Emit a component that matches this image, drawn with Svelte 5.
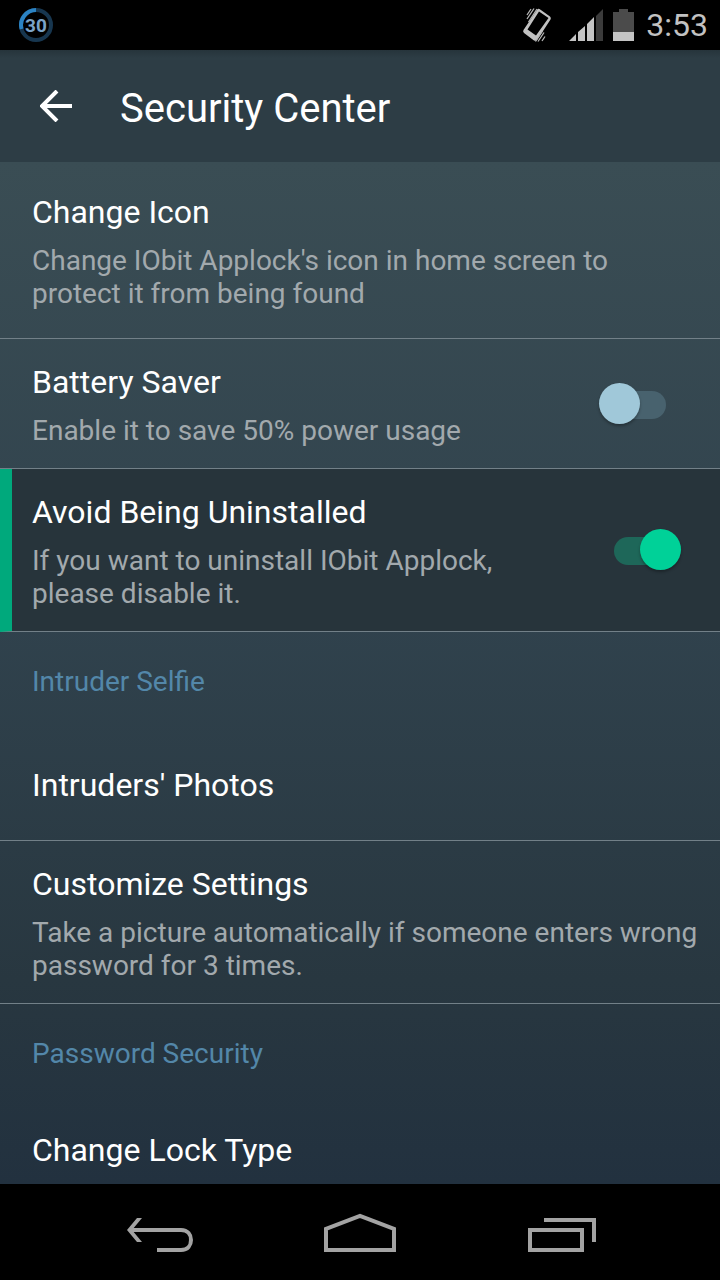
<script>
    let settings = $state([
        {
            id: "change-icon",
            title: "Change Icon",
            details:
                "Change IObit Applock's icon in home screen to protect it from being found",
            roomy: true,
        },
        {
            id: "battery-saver",
            title: "Battery Saver",
            details: "Enable it to save 50% power usage",
            toggle: true,
            enabled: false,
        },
        {
            id: "avoid-uninstall",
            title: "Avoid Being Uninstalled",
            details: "If you want to uninstall IObit Applock, please disable it.",
            toggle: true,
            enabled: true,
        },
    ]);
</script>

{#snippet rowText(title, details)}
    <span class="title">{title}</span>
    {#if details}
        <span class="details">{details}</span>
    {/if}
{/snippet}

<div class="screen">
    <div class="status">
        <svg class="badge" width="36" height="36" viewBox="0 0 36 36">
            <circle cx="18" cy="18" r="15" fill="none" stroke="#17364f" stroke-width="4" />
            <path d="M18 3A15 15 0 0 0 3.6 22" fill="none" stroke="#2b83c4" stroke-width="4" />
            <text x="18" y="25" text-anchor="middle">30</text>
        </svg>
        <div class="indicators">
            <svg width="30" height="36" viewBox="0 0 30 36">
                <path
                    fill="#c2c2c2"
                    fill-rule="evenodd"
                    d="M17.500 2L28 9.500Q29.500 11 28.500 12.500L15.500 32.500Q14 34.500 12 33.500L2 26Q0.500 24.500 1.500 23L15 3Q16 1 17.500 2ZM17 4.500L5.500 22.500L14 28.500L26.500 11Z"
                />
                <path
                    d="M5 12L12 1.500M5 8L9 2M6.500 15L15 2M16 34.500L22 25.500M20 34L23 29.500M13.500 34.500L20.500 24"
                    fill="none"
                    stroke="#b5b5b5"
                    stroke-width="1.3"
                />
            </svg>
            <svg class="signal" width="34" height="32" viewBox="0 0 34 32">
                <path
                    fill="#c4c4c4"
                    d="M0 32L7 25V32ZM9 23L16 17V32H9ZM18 15L25 8V32H18Z"
                />
                <path fill="#3b3b3b" d="M27 7L34 0V32H27Z" />
            </svg>
            <svg class="battery" width="21" height="32" viewBox="0 0 21 32">
                <path fill="#4b4b4b" d="M6 0H15V3H21V23H0V3H6Z" />
                <path fill="#c4c4c4" d="M0 23H21V32H0Z" />
            </svg>
            <span class="clock">3:53</span>
        </div>
    </div>

    <header>
        <button class="back" aria-label="Back">
            <svg width="32" height="32" viewBox="0 0 32 32">
                <path
                    d="M17 1L2 16L17 31M2 16H32"
                    fill="none"
                    stroke="#fff"
                    stroke-width="4"
                />
            </svg>
        </button>
        <h1>Security Center</h1>
    </header>

    <main>
        {#each settings as item (item.id)}
            {#if item.toggle}
                <label class="row" class:active={item.enabled} for={item.id}>
                    <span class="text">
                        {@render rowText(item.title, item.details)}
                    </span>
                    <input
                        id={item.id}
                        class="switch"
                        type="checkbox"
                        bind:checked={item.enabled}
                    />
                </label>
            {:else}
                <button class="row" class:roomy={item.roomy}>
                    <span class="text">
                        {@render rowText(item.title, item.details)}
                    </span>
                </button>
            {/if}
        {/each}

        <h2>Intruder Selfie</h2>
        <button class="row single">
            <span class="text">{@render rowText("Intruders' Photos")}</span>
        </button>
        <button class="row">
            <span class="text">
                {@render rowText(
                    "Customize Settings",
                    "Take a picture automatically if someone enters wrong password for 3 times.",
                )}
            </span>
        </button>

        <h2>Password Security</h2>
        <button class="row lock-type">
            <span class="text">{@render rowText("Change Lock Type")}</span>
        </button>
    </main>

    <nav>
        <button aria-label="Back">
            <svg width="72" height="48" viewBox="0 0 72 48">
                <path
                    d="M33 42H57C64 42 67 37 67 32C67 27 64 22 57 22H6"
                    fill="none"
                    stroke="#a3a3a3"
                    stroke-width="4"
                />
                <path fill="#a3a3a3" d="M13 10H18L8 22L18 34H13L3 22Z" />
            </svg>
        </button>
        <button aria-label="Home">
            <svg width="72" height="48" viewBox="0 0 72 48">
                <path
                    d="M2 42V21L36 8L70 21V42Z"
                    fill="none"
                    stroke="#a3a3a3"
                    stroke-width="4"
                />
            </svg>
        </button>
        <button aria-label="Recent apps">
            <svg width="72" height="48" viewBox="0 0 72 48">
                <path
                    d="M6 22H58V42H6ZM20 12H70V34"
                    fill="none"
                    stroke="#a3a3a3"
                    stroke-width="4"
                />
            </svg>
        </button>
    </nav>
</div>

<style>
    :global(body) {
        background-color: #000;
        font-family: Roboto, "Liberation Sans", sans-serif;
    }
    .screen {
        display: flex;
        flex-direction: column;
        height: 100vh;
        color: #fff;
    }
    button {
        border: none;
        padding: 0;
        background: none;
        color: inherit;
        font: inherit;
        text-align: left;
        cursor: pointer;
    }
    svg {
        display: block;
    }
    .status {
        display: flex;
        flex-shrink: 0;
        align-items: center;
        justify-content: space-between;
        height: 50px;
        padding: 0 12px 0 18px;
        background-color: #000;
    }
    .badge text {
        fill: #7ba3c8;
        font-size: 19px;
        font-weight: bold;
    }
    .indicators {
        display: flex;
        align-items: center;
    }
    .signal {
        margin-left: 17px;
    }
    .battery {
        margin: 0 12px 0 10px;
    }
    .clock {
        color: #c2c2c2;
        font-size: 32px;
        line-height: 50px;
    }
    header {
        display: flex;
        flex-shrink: 0;
        align-items: center;
        gap: 48px;
        height: 112px;
        padding: 0 40px;
        background: linear-gradient(#26343b, #2d3d45 8px);
    }
    h1 {
        margin: 6px 0 0;
        font-size: 40px;
        font-weight: normal;
        line-height: 48px;
    }
    main {
        flex: 1;
        min-height: 0;
        overflow-y: auto;
        scrollbar-width: none;
        background: linear-gradient(#3a4d54, #30424d 45%, #283740 80%, #22313f);
    }
    .row {
        display: flex;
        align-items: center;
        width: 100%;
        box-sizing: border-box;
        padding: 24px 8px 21px 32px;
        border-bottom: 1px solid #728088;
        cursor: pointer;
    }
    .roomy {
        padding: 31px 32px 28px;
    }
    .single {
        padding-top: 35px;
        padding-bottom: 36px;
    }
    .lock-type {
        padding-top: 28px;
    }
    label.row {
        padding-right: 39px;
    }
    .active {
        padding-left: 20px;
        border-left: 12px solid #00a97c;
        background-color: #27343b;
    }
    .text {
        flex: 1;
        display: flex;
        flex-direction: column;
        gap: 13px;
    }
    label .text {
        padding-right: 32px;
    }
    .title {
        font-size: 32px;
        line-height: 38px;
    }
    .details {
        color: #a2a9ad;
        font-size: 28px;
        line-height: 33px;
    }
    h2 {
        margin: 0;
        padding: 1px 32px 0;
        color: #5387a9;
        font-size: 28px;
        font-weight: normal;
        line-height: 98px;
    }
    .switch {
        appearance: none;
        position: relative;
        flex-shrink: 0;
        width: 82px;
        height: 42px;
        margin: 0 0 3px;
        cursor: pointer;
    }
    .switch::before,
    .switch::after {
        content: "";
        position: absolute;
    }
    /* track */
    .switch::before {
        top: 8px;
        left: 15px;
        width: 52px;
        height: 28px;
        border-radius: 14px;
        background-color: #48626e;
    }
    /* thumb */
    .switch::after {
        top: 0;
        left: 0;
        width: 41px;
        height: 41px;
        border-radius: 50%;
        background-color: #a0c8d9;
        box-shadow: 0 2px 3px rgba(0, 0, 0, 0.3);
    }
    .switch:checked::before {
        background-color: #1e6759;
    }
    .switch:checked::after {
        left: 41px;
        background-color: #00d198;
    }
    nav {
        display: grid;
        grid-template-columns: repeat(3, 1fr);
        flex-shrink: 0;
        height: 96px;
        padding: 0 60px;
        background-color: #000;
    }
    nav button {
        display: flex;
        align-items: center;
        justify-content: center;
    }
</style>
